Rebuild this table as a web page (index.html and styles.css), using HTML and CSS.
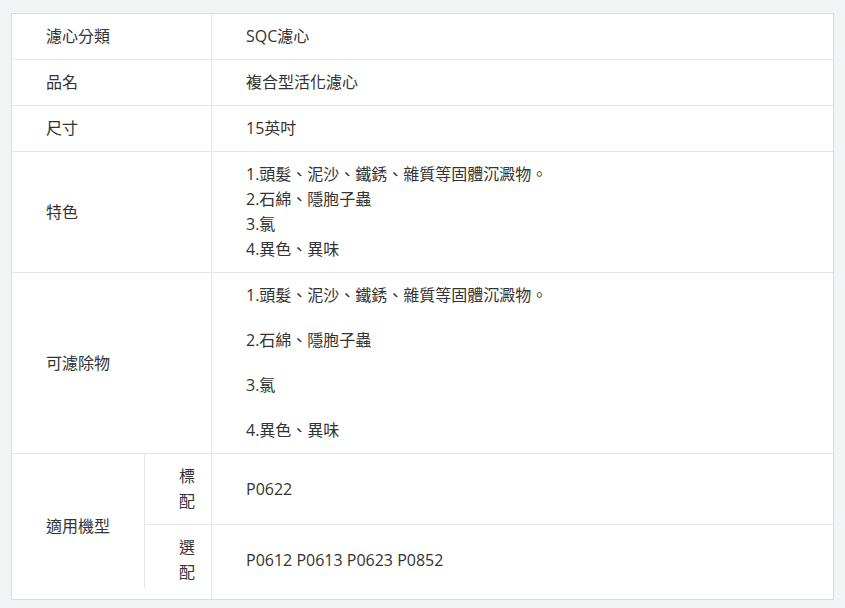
FILE: index.html
```html
<!DOCTYPE html>
<html lang="zh-Hant">
<head>
<meta charset="utf-8">
<title>規格</title>
<link rel="stylesheet" href="styles.css">
</head>
<body>
<div class="spec">
  <div class="row">
    <div class="label">濾心分類</div>
    <div class="value">SQC濾心</div>
  </div>
  <div class="row">
    <div class="label">品名</div>
    <div class="value">複合型活化濾心</div>
  </div>
  <div class="row">
    <div class="label">尺寸</div>
    <div class="value">15英吋</div>
  </div>
  <div class="row">
    <div class="label">特色</div>
    <div class="value">
      <div>1.頭髮、泥沙、鐵銹、雜質等固體沉澱物。</div>
      <div>2.石綿、隱胞子蟲</div>
      <div>3.氯</div>
      <div>4.異色、異味</div>
    </div>
  </div>
  <div class="row">
    <div class="label">可濾除物</div>
    <div class="value spaced">
      <p>1.頭髮、泥沙、鐵銹、雜質等固體沉澱物。</p>
      <p>2.石綿、隱胞子蟲</p>
      <p>3.氯</p>
      <p>4.異色、異味</p>
    </div>
  </div>
  <div class="row last">
    <div class="label short">適用機型</div>
    <div class="subs">
      <div class="subrow">
        <div class="sublabel">標配</div>
        <div class="value">P0622</div>
      </div>
      <div class="subrow final">
        <div class="sublabel">選配</div>
        <div class="value">P0612 P0613 P0623 P0852</div>
      </div>
    </div>
  </div>
</div>
</body>
</html>
```
FILE: styles.css
```css
html, body {
  margin: 0;
  background: #f2f3f5;
}
body {
  padding: 13px 11px 8px;
  font-family: "Open Sans", "Noto Sans CJK TC", sans-serif;
  font-size: 16px;
  line-height: 25px;
  color: #333;
}
.spec {
  background: #fff;
  border: 1px solid #dcdcdc;
}
.row {
  display: flex;
  border-bottom: 1px solid #e6e6e6;
}
.row.last {
  border-bottom: none;
}
.label {
  width: 199px;
  flex: none;
  border-right: 1px solid #e6e6e6;
  padding: 10px 34px;
  box-sizing: border-box;
  width: 200px;
  display: flex;
  align-items: center;
}
.label.short {
  width: 132px;
  border-right: none;
}
.value {
  flex: 1;
  padding: 10px 34px;
  display: flex;
  flex-direction: column;
  justify-content: center;
}
.spaced p {
  margin: 0 0 20px;
}
.spaced p:last-child {
  margin-bottom: 0;
}
.subs {
  flex: 1;
  display: flex;
  flex-direction: column;
}
.subrow {
  display: flex;
  border-bottom: 1px solid #e6e6e6;
}
.subrow.final {
  border-bottom: none;
}
.sublabel {
  width: 68px;
  box-sizing: border-box;
  flex: none;
  padding: 10px 16px 10px 31px;
  text-align: right;
  border-right: 1px solid #e6e6e6;
  background: linear-gradient(#e6e6e6, #e6e6e6) left top / 1px 100% no-repeat;
}
.subrow.final .sublabel {
  padding-bottom: 14px;
  background-size: 1px calc(100% - 11px);
}
.subrow.final .value {
  padding-bottom: 14px;
}
```
